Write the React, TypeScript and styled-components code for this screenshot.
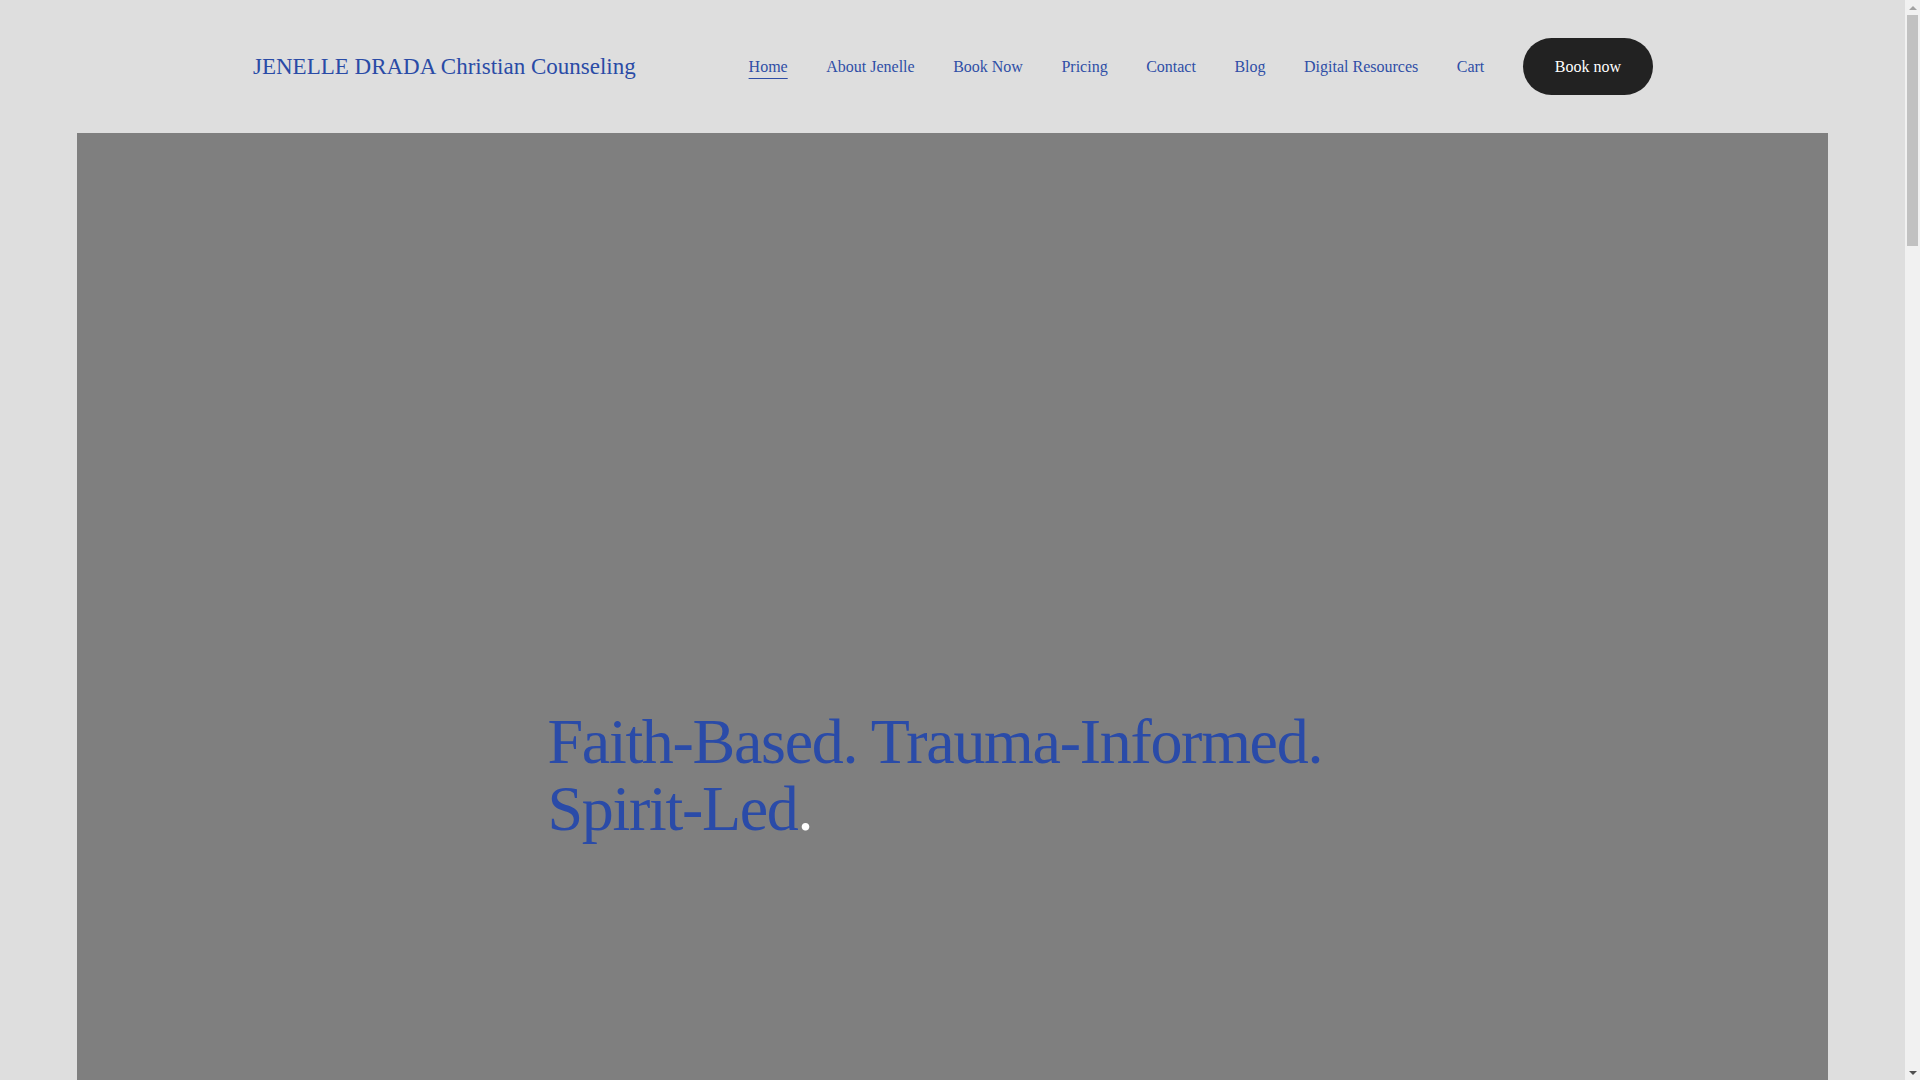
import React from "react";
import styled, { createGlobalStyle } from "styled-components";

const GlobalStyle = createGlobalStyle`
  html, body {
    margin: 0;
    padding: 0;
    background: #dedede;
    font-family: "Liberation Serif", "Times New Roman", serif;
    overflow: hidden;
  }
  * { box-sizing: border-box; }
`;

const Shell = styled.div`
  display: flex;
  height: 100vh;
  overflow: hidden;
`;

const Page = styled.div`
  flex: 1;
  min-width: 0;
  display: flex;
  flex-direction: column;
  background: #dedede;
`;

const Scrollbar = styled.aside`
  width: 15px;
  flex: 0 0 15px;
  background: #f1f1f1;
  display: flex;
  flex-direction: column;
  align-items: center;
`;

const Arrow = styled.div<{ $down?: boolean }>`
  height: 15px;
  width: 15px;
  display: flex;
  align-items: center;
  justify-content: center;
  &::before {
    content: "";
    width: 0;
    height: 0;
    border-left: 4px solid transparent;
    border-right: 4px solid transparent;
    ${(p) =>
      p.$down
        ? "border-top: 4px solid #505050;"
        : "border-bottom: 4px solid #a3a3a3;"}
  }
`;

const Thumb = styled.div`
  width: 11px;
  height: 231px;
  background: #c1c1c1;
`;

const Track = styled.div`
  flex: 1;
`;

const Header = styled.header`
  height: 133px;
  flex: 0 0 133px;
  display: flex;
  align-items: center;
  padding: 0 252px 0 253px;
`;

const Logo = styled.a`
  font-size: 23px;
  color: #2a4ba6;
  text-decoration: none;
  white-space: nowrap;
  line-height: 1.2;
`;

const Nav = styled.nav`
  margin-left: auto;
  display: flex;
  align-items: center;
  gap: 38.5px;
`;

const NavLink = styled.a<{ $active?: boolean }>`
  font-size: 16px;
  color: #2f4ea6;
  white-space: nowrap;
  text-decoration: ${(p) => (p.$active ? "underline" : "none")};
  text-decoration-thickness: 1px;
  text-underline-offset: 6px;
`;

const BookButton = styled.a`
  height: 57px;
  padding: 0 32px;
  display: inline-flex;
  align-items: center;
  justify-content: center;
  background: #222222;
  color: #ffffff;
  border-radius: 300px;
  font-size: 16px;
  text-decoration: none;
  white-space: nowrap;
`;

const Hero = styled.section`
  margin: 0 77px;
  min-height: 1284px;
  flex: 0 0 1284px;
  background: #7f7f7f;
  display: flex;
  align-items: center;
  justify-content: center;
`;

const HeroInner = styled.div`
  width: 810px;
`;

const Headline = styled.h1`
  margin: 0;
  font-weight: 400;
  font-size: 64px;
  line-height: 67px;
  letter-spacing: -1.3px;
  color: #2a4ba8;
`;

const WhiteDot = styled.span`
  color: #ffffff;
`;

const Below = styled.section`
  flex: 0 0 3480px;
  background: #dedede;
`;

const navItems = [
  "Home",
  "About Jenelle",
  "Book Now",
  "Pricing",
  "Contact",
  "Blog",
  "Digital Resources",
  "Cart",
];

export default function App() {
  return (
    <>
      <GlobalStyle />
      <Shell>
        <Page>
          <Header>
            <Logo href="#">JENELLE DRADA Christian Counseling</Logo>
            <Nav>
              {navItems.map((item) => (
                <NavLink key={item} href="#" $active={item === "Home"}>
                  {item}
                </NavLink>
              ))}
              <BookButton href="#">Book now</BookButton>
            </Nav>
          </Header>
          <Hero>
            <HeroInner>
              <Headline>
                Faith-Based. Trauma-Informed.
                <br />
                Spirit-Led<WhiteDot>.</WhiteDot>
              </Headline>
            </HeroInner>
          </Hero>
          <Below />
        </Page>
        <Scrollbar aria-hidden="true">
          <Arrow />
          <Thumb />
          <Track />
          <Arrow $down />
        </Scrollbar>
      </Shell>
    </>
  );
}
